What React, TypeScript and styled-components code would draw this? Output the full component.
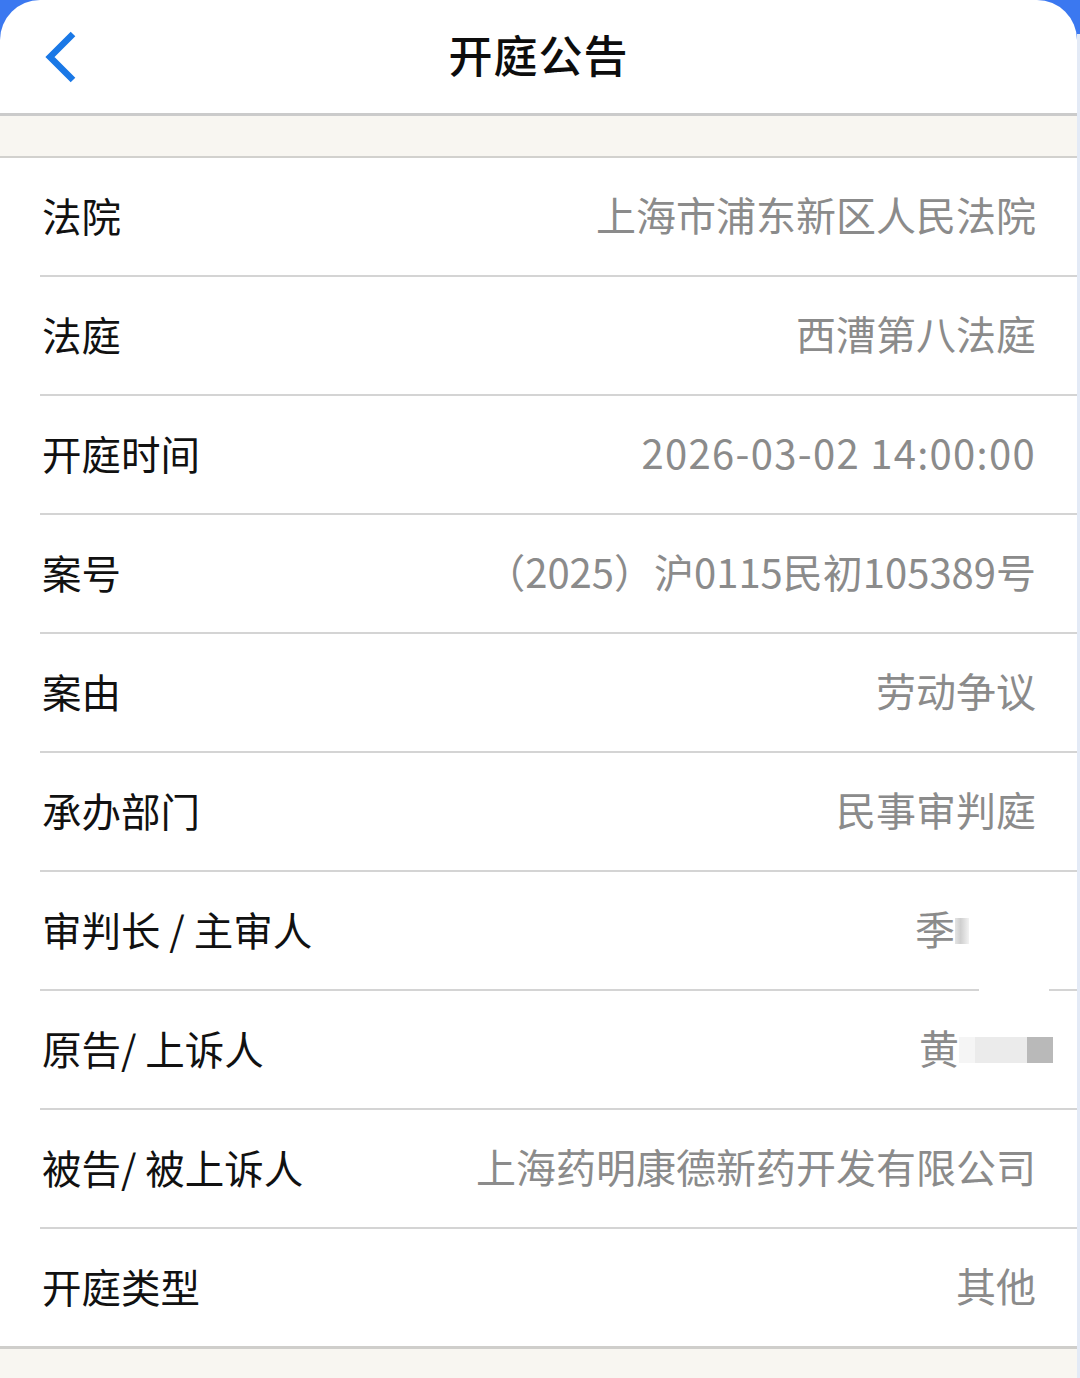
import React from 'react';
import styled, { createGlobalStyle } from 'styled-components';

const GlobalStyle = createGlobalStyle`
    html, body {
        margin: 0;
        padding: 0;
        background: #3b78f0;
    }
    body {
        font-family: "Noto Sans CJK SC", "Noto Sans", sans-serif;
        -webkit-font-smoothing: antialiased;
    }
`;

const Frame = styled.div`
    display: flex;
    width: 1080px;
    height: 1378px;
    overflow: hidden;
`;

const Screen = styled.div`
    flex: 1;
    display: flex;
    flex-direction: column;
    background: #ffffff;
    border-radius: 40px 40px 0 0;
    overflow: hidden;
`;

const Edge = styled.div`
    width: 3px;
    background: linear-gradient(#3b78f0 0 34px, #e3eaf6 34px);
`;

const Header = styled.header`
    position: relative;
    flex-shrink: 0;
    height: 113px;
    display: flex;
    align-items: center;
    justify-content: center;
    border-bottom: 3px solid #cbcbcb;
`;

const BackButton = styled.button`
    position: absolute;
    left: 38px;
    top: 28px;
    width: 44px;
    height: 58px;
    padding: 0;
    border: none;
    background: none;
    display: flex;
    align-items: center;
    justify-content: center;
`;

const Title = styled.h1`
    margin: 0 0 6px;
    font-size: 44px;
    font-weight: 500;
    color: #0d0d0d;
    letter-spacing: 1px;
`;

const Band = styled.div<{ $h: number }>`
    flex-shrink: 0;
    height: ${p => p.$h}px;
    background: #f8f6f1;
    border-bottom: 2px solid #d2d1ce;
`;

const List = styled.div`
    flex-shrink: 0;
    display: flex;
    flex-direction: column;
`;

const Row = styled.div<{ $last?: boolean }>`
    position: relative;
    flex-shrink: 0;
    box-sizing: border-box;
    height: ${p => (p.$last ? 120 : 119)}px;
    margin-left: ${p => (p.$last ? 0 : 40)}px;
    padding: 0 41px 5px ${p => (p.$last ? 42 : 2)}px;
    display: flex;
    align-items: center;
    justify-content: space-between;
    border-bottom: ${p => (p.$last ? '3px solid #cfcecb' : '2px solid #d4d4d4')};
`;

const Label = styled.span`
    font-size: 39.5px;
    color: #111111;
    white-space: nowrap;
`;

const Value = styled.span<{ $spaced?: boolean }>`
    font-size: 40px;
    color: #8b8b8b;
    white-space: nowrap;
    display: flex;
    align-items: center;
    letter-spacing: ${p => (p.$spaced ? '1.3px' : '0')};
`;

const Block = styled.span<{ $w: number; $c: string; $pull?: number }>`
    display: inline-block;
    width: ${p => p.$w}px;
    height: 26px;
    background: ${p => p.$c};
    margin-top: 6px;
    margin-right: ${p => -(p.$pull || 0)}px;
`;

const LineGap = styled.span`
    position: absolute;
    right: 28px;
    bottom: -3px;
    width: 70px;
    height: 4px;
    background: #ffffff;
`;

const BackIcon = () => (
    <svg width="40" height="56" viewBox="0 0 40 56">
        <path
            d="M33 5 L10 28 L33 51"
            fill="none"
            stroke="#1a78e6"
            strokeWidth="6.5"
            strokeLinecap="butt"
            strokeLinejoin="miter"
        />
    </svg>
);

interface IItem {
    label: string;
    value: React.ReactNode;
    spaced?: boolean;
    gap?: boolean;
}

const items: IItem[] = [
    { label: '法院', value: '上海市浦东新区人民法院' },
    { label: '法庭', value: '西漕第八法庭' },
    { label: '开庭时间', value: '2026-03-02 14:00:00', spaced: true },
    { label: '案号', value: '（2025）沪0115民初105389号' },
    { label: '案由', value: '劳动争议' },
    { label: '承办部门', value: '民事审判庭' },
    {
        label: '审判长 / 主审人',
        gap: true,
        value: (
            <>
                季
                <Block $w={14} $c="linear-gradient(90deg, #e4e4e4, #cfcfcf 40%, #f2f2f2)" />
                <Block $w={67} $c="#ffffff" />
            </>
        ),
    },
    {
        label: '原告/ 上诉人',
        value: (
            <>
                黄
                <Block $w={16} $c="#f5f5f5" />
                <Block $w={52} $c="#ebebeb" />
                <Block $w={26} $c="#b9b9b9" $pull={17} />
            </>
        ),
    },
    { label: '被告/ 被上诉人', value: '上海药明康德新药开发有限公司' },
    { label: '开庭类型', value: '其他' },
];

const App: React.FunctionComponent = () => {
    return (
        <>
            <GlobalStyle />
            <Frame>
                <Screen>
                    <Header>
                        <BackButton aria-label="返回">
                            <BackIcon />
                        </BackButton>
                        <Title>开庭公告</Title>
                    </Header>
                    <Band $h={40} />
                    <List>
                        {items.map((item, i) => (
                            <Row key={item.label} $last={i === items.length - 1}>
                                <Label>{item.label}</Label>
                                <Value $spaced={item.spaced}>{item.value}</Value>
                                {item.gap && <LineGap />}
                            </Row>
                        ))}
                    </List>
                    <Band $h={40} />
                </Screen>
                <Edge />
            </Frame>
        </>
    );
};

export default App;
